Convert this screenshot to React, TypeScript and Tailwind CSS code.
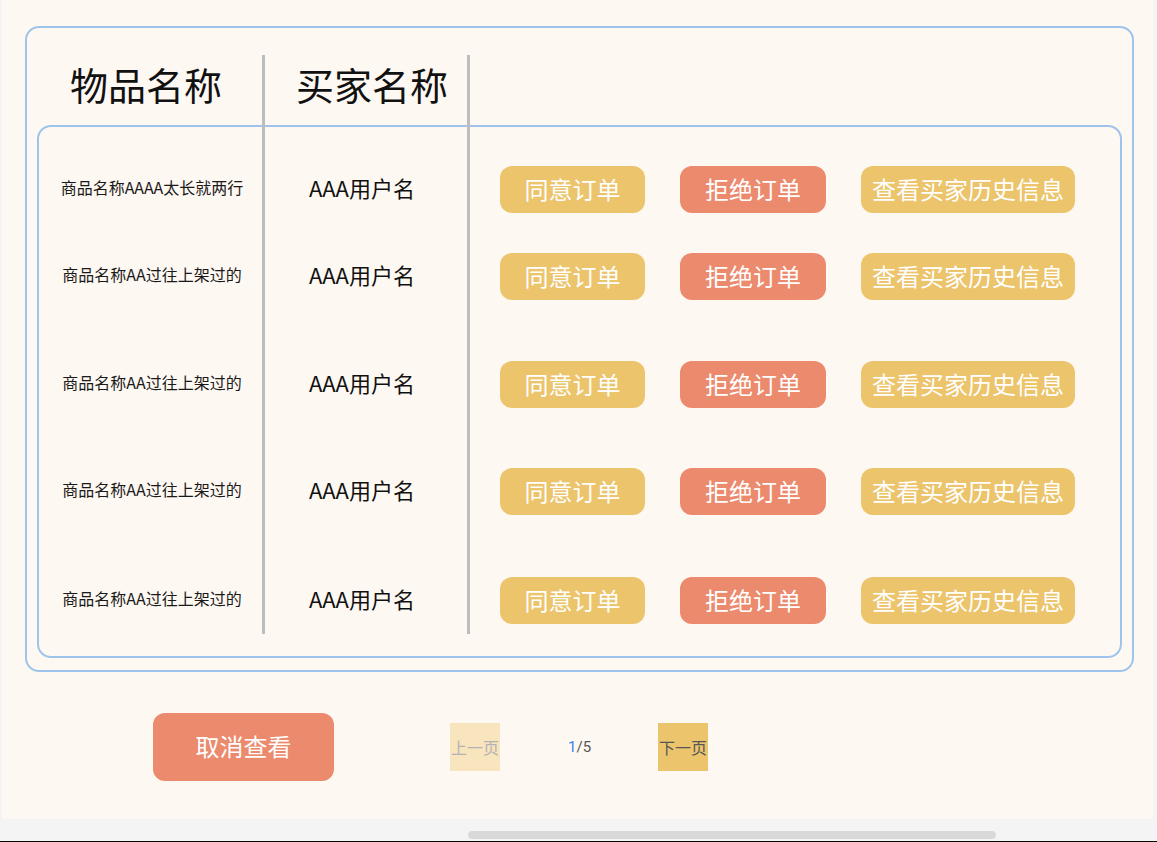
import React from "react";

const rows = [
  { name: "商品名称AAAA太长就两行", gap: "" },
  { name: "商品名称AA过往上架过的", gap: "mt-[40px]" },
  { name: "商品名称AA过往上架过的", gap: "mt-[61px]" },
  { name: "商品名称AA过往上架过的", gap: "mt-[60px]" },
  { name: "商品名称AA过往上架过的", gap: "mt-[62px]" },
];

const cjk = { fontFamily: "'Noto Sans CJK SC', 'Noto Sans', sans-serif" };

export default function App() {
  return (
    <div
      className="w-[1157px] h-[842px] bg-[#f4f4f4] flex flex-col overflow-hidden"
      style={cjk}
    >
      <div className="ml-[2px] w-[1151px] h-[819px] bg-[#fef8f2] flex flex-col">
        {/* order table */}
        <div className="relative ml-[23px] mt-[26px] w-[1109px] border-2 border-[#9ec4ec] rounded-[14px] flex flex-col">
          <div className="flex h-[97px] pt-[34px] text-[38px] leading-[44px] text-[#111]">
            <div className="w-[238px] text-center">物品名称</div>
            <div className="w-[205px] pl-[9px] text-center">买家名称</div>
          </div>

          <div className="mx-[10px] mb-[12px] border-2 border-[#9ec4ec] rounded-[14px] pt-[39px] pb-[32px] flex flex-col">
            {rows.map((row, i) => (
              <div key={i} className={"flex items-center h-[47px] " + row.gap}>
                <div className="w-[226px] pb-[5px] text-center text-[16px] text-[#1a1a1a]">
                  {row.name}
                </div>
                <div className="w-[205px] pr-[11px] pb-[5px] text-center text-[22px] text-[#111]">
                  AAA用户名
                </div>
                <button className="ml-[30px] w-[145px] h-[47px] pb-[2px] rounded-[12px] bg-[#ecc46c] text-white text-[24px]">
                  同意订单
                </button>
                <button className="ml-[35px] w-[146px] h-[47px] pb-[2px] rounded-[12px] bg-[#ec8a6e] text-white text-[24px]">
                  拒绝订单
                </button>
                <button className="ml-[35px] w-[214px] h-[47px] pb-[2px] rounded-[12px] bg-[#ecc46c] text-white text-[24px]">
                  查看买家历史信息
                </button>
              </div>
            ))}
          </div>

          {/* column dividers */}
          <div className="absolute left-[235px] top-[27px] w-[3px] h-[579px] bg-[#bdbdbd]" />
          <div className="absolute left-[440px] top-[27px] w-[3px] h-[579px] bg-[#bdbdbd]" />
        </div>

        {/* footer */}
        <div className="flex items-center mt-[41px]">
          <button className="ml-[151px] w-[181px] h-[68px] pb-[2px] rounded-[12px] bg-[#ec8a6e] text-white text-[24px]">
            取消查看
          </button>
          <button className="ml-[116px] w-[50px] h-[48px] bg-[#f8e4bd] text-[#b3b3b3] text-[16px]">
            上一页
          </button>
          <div
            className="ml-[68px] text-[15px] text-[#555]"
            style={{ fontFamily: "Roboto, sans-serif" }}
          >
            <span className="text-[#3b7ff0]">1</span>/5
          </div>
          <button className="ml-[67px] w-[50px] h-[48px] bg-[#ecc46c] text-[#555] text-[16px]">
            下一页
          </button>
        </div>
      </div>

      {/* horizontal scrollbar */}
      <div className="h-[22px] bg-[#f4f4f4] pt-[12px]">
        <div className="ml-[468px] w-[528px] h-[8px] rounded-full bg-[#d9d9d9]" />
      </div>
      <div className="h-[1px] bg-black" />
    </div>
  );
}
